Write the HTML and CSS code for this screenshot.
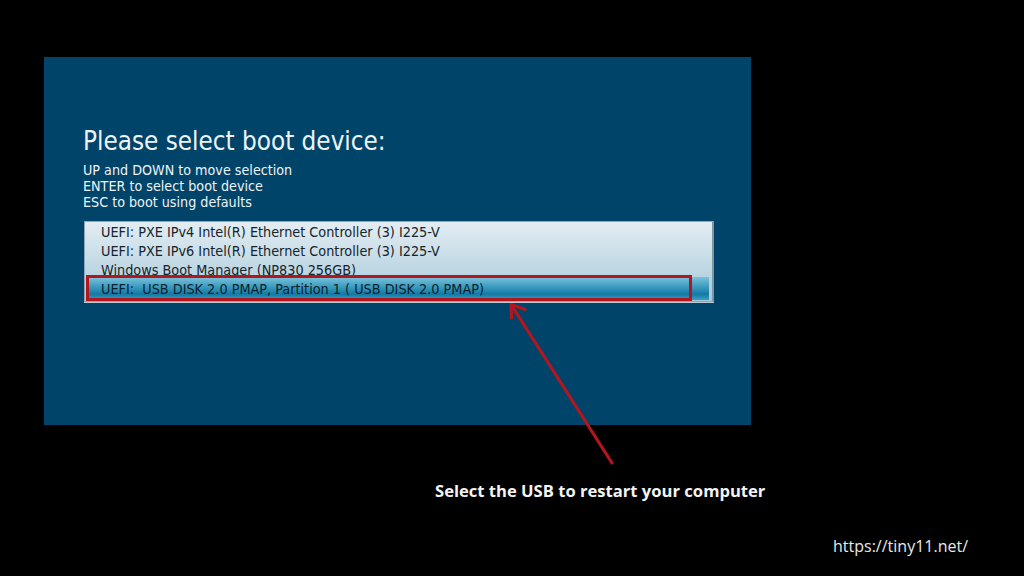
FILE: index.html
```html
<!DOCTYPE html>
<html lang="en">
<head>
<meta charset="utf-8">
<title>Select boot device</title>
<link rel="stylesheet" href="styles.css">
</head>
<body>
<div class="page">
  <div class="screen">
    <h1 class="title">Please select boot device:</h1>
    <div class="help">
      <div>UP and DOWN to move selection</div>
      <div>ENTER to select boot device</div>
      <div>ESC to boot using defaults</div>
    </div>
    <div class="list">
      <div class="item">UEFI: PXE IPv4 Intel(R) Ethernet Controller (3) I225-V</div>
      <div class="item">UEFI: PXE IPv6 Intel(R) Ethernet Controller (3) I225-V</div>
      <div class="item">Windows Boot Manager (NP830 256GB)</div>
      <div class="item selected">UEFI:  USB DISK 2.0 PMAP, Partition 1 ( USB DISK 2.0 PMAP)</div>
      <div class="highlight"></div>
    </div>
  </div>
  <p class="caption">Select the USB to restart your computer</p>
  <p class="url">https://tiny11.net/</p>
  <svg class="arrow" width="1024" height="576" viewBox="0 0 1024 576">
    <g stroke="#b5161e" stroke-width="3.2" stroke-linecap="round" fill="none">
      <line x1="612" y1="463" x2="512" y2="306"/>
      <polyline points="511.5,318 511,304.5 525,309.5" stroke-linejoin="round"/>
    </g>
  </svg>
</div>
</body>
</html>
```
FILE: styles.css
```css
html, body {
  margin: 0;
  padding: 0;
  background: #000;
}

.page {
  position: relative;
  width: 1024px;
  height: 576px;
  overflow: hidden;
  background: #000;
  display: flex;
  flex-direction: column;
}

.screen {
  box-sizing: border-box;
  margin: 57px 0 0 44px;
  width: 707px;
  height: 368px;
  padding: 69px 0 0 39px;
  background: #01446a;
  font-family: "DejaVu Sans Condensed", "DejaVu Sans", sans-serif;
  font-stretch: condensed;
}

.title {
  margin: 0;
  font-size: 25.8px;
  line-height: 30px;
  font-weight: normal;
  color: #eef3f6;
}

.help {
  margin-top: 6px;
  font-size: 14.2px;
  line-height: 16px;
  color: #eef3f6;
}

.list {
  position: relative;
  box-sizing: border-box;
  margin: 11px 0 0 1px;
  width: 630px;
  padding: 1px 3px 1px 1px;
  border: 1px solid #8fa7b4;
  border-right: 2px solid #7e96a3;
  background: linear-gradient(#e3edf2 0%, #c4dbe6 50%, #a6c8d8 100%);
  box-shadow: 0 1px 0 #b9cbd4;
  font-size: 14.3px;
  color: #16232b;
}

.item {
  height: 19px;
  line-height: 19px;
  padding-left: 15px;
  white-space: pre;
  overflow: hidden;
}

.item.selected {
  margin-top: -3px;
  height: 23px;
  line-height: 21px;
  padding-top: 2px;
  box-sizing: border-box;
  background: linear-gradient(#7cc3dc 0%, #3f9dc2 40%, #137aa4 75%, #3a9fc6 100%);
  color: #0d1f2a;
}

.highlight {
  position: absolute;
  left: 1px;
  top: 53px;
  width: 606px;
  height: 26px;
  box-sizing: border-box;
  border: 3px solid #b3161d;
}

.caption {
  margin: 55px 0 0 435px;
  font-family: "Open Sans", sans-serif;
  font-weight: 700;
  font-size: 16.6px;
  line-height: 22px;
  color: #f4f4f4;
}

.url {
  margin: 34px 0 0 833px;
  font-family: "Open Sans", sans-serif;
  font-weight: 400;
  font-size: 16px;
  line-height: 20px;
  color: #e8e8e8;
}

.arrow {
  position: absolute;
  left: 0;
  top: 0;
  pointer-events: none;
}
```
